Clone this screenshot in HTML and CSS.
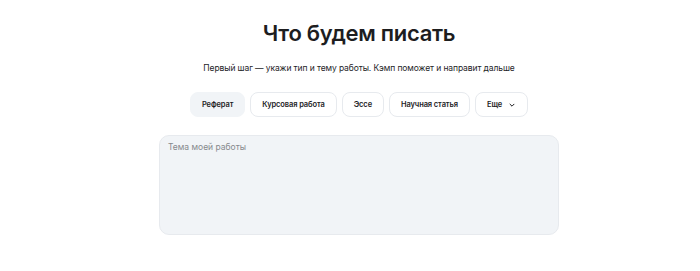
FILE: index.html
```html
<!DOCTYPE html>
<html lang="ru">
  <head>
    <meta name="viewport" content="width=device-width, initial-scale=1.0" />
    <link rel="stylesheet" href="styles.css">
  </head>
  <body>
    <div class="container">
      <h1 class="title">Что будем писать</h1>
      <p class="lead">Первый шаг — укажи тип и тему работы. Кэмп поможет и направит дальше</p>
      <div class="types">
        <button class="chip active">Реферат</button>
        <button class="chip">Курсовая работа</button>
        <button class="chip">Эссе</button>
        <button class="chip">Научная статья</button>
        <button class="chip more">
          Еще
          <svg width="8" height="8" viewBox="0 0 8 8"><path d="M2 3.2 L4 5.2 L6 3.2" fill="none" stroke="#1d1d1f" stroke-width="1" stroke-linecap="round" stroke-linejoin="round"/></svg>
        </button>
      </div>
      <textarea class="topic" placeholder="Тема моей работы"></textarea>
    </div>
  </body>
</html>
```

FILE: styles.css
```css
html,
body {
  padding: 0;
  margin: 0;
  background-color: #ffffff;
}
body {
  color: #1d1d1f;
  font-family: Inter, "Noto Sans", sans-serif;
  padding-left: 18px;
}
.container {
  width: 400px;
  margin: 0 auto;
  display: flex;
  flex-direction: column;
  align-items: center;
}
.title {
  margin: 20px 0 0;
  font-size: 22px;
  line-height: 26px;
  font-weight: 600;
  letter-spacing: -0.3px;
}
.lead {
  margin: 16px 0 0;
  font-size: 8.5px;
  line-height: 12px;
  letter-spacing: -0.1px;
}
.types {
  display: flex;
  gap: 5px;
  margin-top: 18px;
}
.chip {
  height: 25px;
  padding: 0 11px;
  border: 1px solid #e7eaee;
  border-radius: 8px;
  background: #ffffff;
  color: #1d1d1f;
  font: 600 7.5px Inter, "Noto Sans", sans-serif;
  letter-spacing: -0.1px;
  display: flex;
  align-items: center;
  gap: 6px;
  cursor: pointer;
}
.chip.active {
  background: #f1f4f7;
  border-color: #f1f4f7;
}
.topic {
  box-sizing: border-box;
  width: 400px;
  height: 100px;
  margin-top: 18px;
  padding: 6px 8px;
  border: 1px solid #e7eaee;
  border-radius: 10px;
  background: #f1f4f7;
  font: 8.5px Inter, "Noto Sans", sans-serif;
  resize: none;
  outline: none;
}
.topic::placeholder {
  color: #86898d;
}
```
